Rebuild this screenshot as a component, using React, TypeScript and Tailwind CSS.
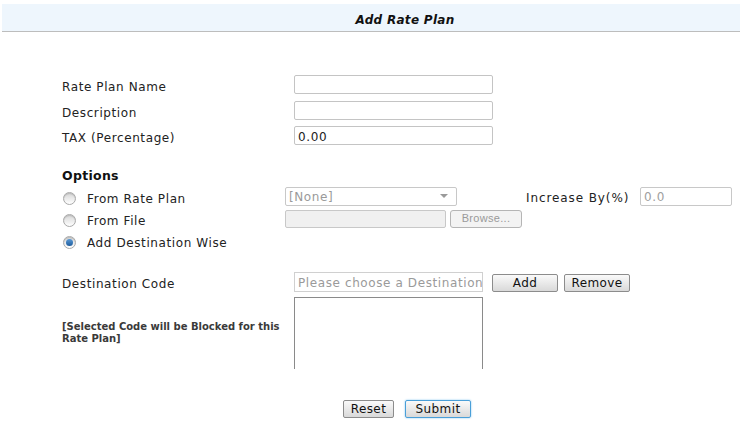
import React from "react";

function Radio({ checked }: { checked?: boolean }) {
  return (
    <span className="w-[13px] h-[13px] rounded-full border border-[#a9a9a9] bg-gradient-to-b from-[#d6d6d6] to-[#ffffff] flex items-center justify-center shadow-[inset_0_1px_1px_rgba(0,0,0,0.15)]">
      {checked && <span className="w-[7px] h-[7px] rounded-full bg-gradient-to-b from-[#5a9ad6] to-[#1d5c9c]" />}
    </span>
  );
}

function GrayButton({ label, width }: { label: string; width: string }) {
  return (
    <button
      className={`${width} h-[18px] border border-[#8c8c8c] rounded-[2px] bg-gradient-to-b from-[#fafafa] to-[#d9d9d9] text-[12px] leading-none text-[#111] tracking-[0.4px] flex items-center justify-center`}
    >
      {label}
    </button>
  );
}

export default function App() {
  return (
    <div className="w-[742px] h-[432px] bg-white text-[12px] tracking-[0.6px] text-[#222] font-['DejaVu_Sans',Verdana,sans-serif] overflow-hidden">
      {/* title bar */}
      <div className="mx-[2px] mt-[4px] h-[28px] bg-[#eef6fd] border-b border-[#bdbdbd] flex items-center justify-center pl-[68px] pt-[4px]">
        <span className="font-bold italic text-[12px] tracking-[0.3px] text-[#111]">Add Rate Plan</span>
      </div>

      <div className="pl-[62px]">
        {/* basic fields */}
        <div className="mt-[43px] flex items-center h-[19px]">
          <div className="w-[232px] pt-[4px]">Rate Plan Name</div>
          <div className="w-[199px] h-[19px] border border-[#c4c4c4] rounded-[2px]" />
        </div>
        <div className="mt-[7px] flex items-center h-[19px]">
          <div className="w-[232px] pt-[4px]">Description</div>
          <div className="w-[199px] h-[19px] border border-[#c4c4c4] rounded-[2px]" />
        </div>
        <div className="mt-[6px] flex items-center h-[19px]">
          <div className="w-[232px] pt-[4px]">TAX (Percentage)</div>
          <div className="w-[199px] h-[19px] border border-[#c4c4c4] rounded-[2px] flex items-center pl-[3px] pt-[2px] text-[#222]">
            0.00
          </div>
        </div>

        {/* options */}
        <div className="mt-[24px] font-bold text-[12.5px] leading-[14px] tracking-[0.3px] text-[#111]">Options</div>

        <div className="mt-[4px] flex items-center h-[22px]">
          <div className="w-[223px] flex items-center pl-[1px] gap-[11px]">
            <Radio />
            <span className="pt-[2px]">From Rate Plan</span>
          </div>
          <div className="w-[172px] h-[19px] -mt-[4px] border border-[#c8c8c8] rounded-[2px] flex items-center justify-between pl-[3px] pr-[8px] text-[#9a9a9a]">
            <span className="pt-[1px]">[None]</span>
            <span className="w-0 h-0 border-l-[4px] border-r-[4px] border-t-[4px] border-l-transparent border-r-transparent border-t-[#9a9a9a]" />
          </div>
          <div className="ml-[69px] w-[114px] -mt-[1px] tracking-[0.9px]">Increase By(%)</div>
          <div className="w-[92px] h-[19px] -mt-[4px] border border-[#c8c8c8] rounded-[2px] flex items-center pl-[3px] pt-[1px] text-[#a0a0a0]">
            0.0
          </div>
        </div>

        <div className="flex items-center h-[22px]">
          <div className="w-[223px] flex items-center pl-[1px] gap-[11px]">
            <Radio />
            <span className="pt-[2px]">From File</span>
          </div>
          <div className="w-[161px] h-[18px] -mt-[3px] border border-[#c8c8c8] rounded-[2px] bg-[#f0f0f0]" />
          <div className="ml-[4px] w-[72px] h-[18px] -mt-[3px] border border-[#b5b5b5] rounded-[3px] bg-[#f3f3f3] flex items-center justify-center text-[11px] tracking-[0.3px] text-[#9a9a9a] font-['Liberation_Sans',Arial,sans-serif]">
            Browse...
          </div>
        </div>

        <div className="flex items-center h-[22px]">
          <div className="w-[223px] flex items-center pl-[1px] gap-[11px]">
            <Radio checked />
            <span className="pt-[2px]">Add Destination Wise</span>
          </div>
        </div>

        {/* destination picker */}
        <div className="mt-[19px] flex items-center h-[20px]">
          <div className="w-[232px] pt-[4px]">Destination Code</div>
          <div className="w-[189px] h-[20px] border border-[#d0d0d0] flex items-center pl-[3px] pt-[1px] text-[#9a9a9a] whitespace-nowrap overflow-hidden">
            Please choose a Destination
          </div>
          <div className="ml-[9px] pt-[1px]">
            <GrayButton label="Add" width="w-[66px]" />
          </div>
          <div className="ml-[6px] pt-[1px]">
            <GrayButton label="Remove" width="w-[66px]" />
          </div>
        </div>

        <div className="mt-[5px] flex">
          <div className="w-[232px] pt-[24px] text-[10px] leading-[12px] tracking-normal font-bold text-[#3a3a3a]">
            [Selected Code will be Blocked for this
            <br />
            Rate Plan]
          </div>
          <div className="w-[189px] h-[72px] border-t border-l border-r border-[#8a8a8a]" />
        </div>

        {/* actions */}
        <div className="mt-[31px] flex items-center pl-[281px] gap-[11px]">
          <GrayButton label="Reset" width="w-[51px]" />
          <button className="w-[66px] h-[18px] border border-[#4a9fd8] rounded-[2px] bg-gradient-to-b from-[#fafafa] to-[#d9d9d9] text-[12px] leading-none tracking-[0.4px] text-[#111] flex items-center justify-center shadow-[0_0_2px_#7cc0ee]">
            Submit
          </button>
        </div>
      </div>
    </div>
  );
}
